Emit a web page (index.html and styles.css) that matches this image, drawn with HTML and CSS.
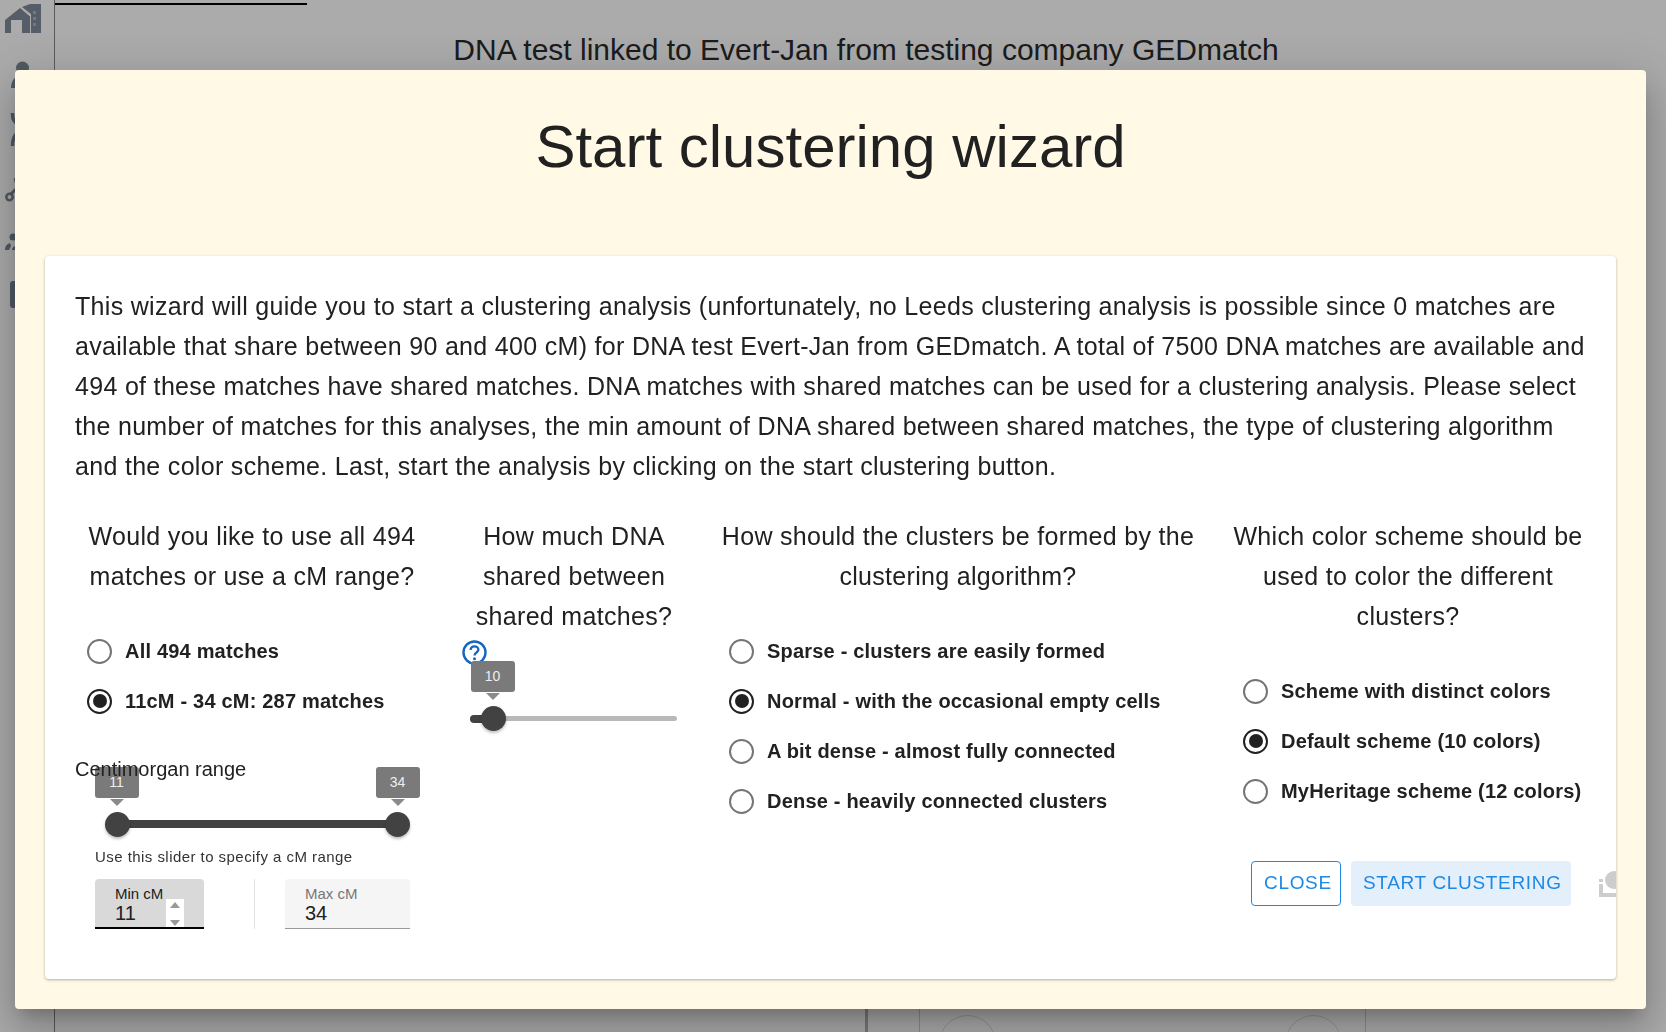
FILE: index.html
```html
<!DOCTYPE html>
<html lang="en">
<head>
<meta charset="utf-8">
<title>Start clustering wizard</title>
<link rel="stylesheet" href="styles.css">
</head>
<body>
<div class="page">
  <aside class="side">
    <svg class="home" viewBox="0 0 36 30"><path d="M0 16 15 4l10 8.500V29H17V16H6v13H0z"/><path d="M17 3 25 0h11v29H26V10z"/><rect x="28" y="7" width="3" height="3" fill="#b4b4b4"/><rect x="28" y="13" width="3" height="3" fill="#b4b4b4"/><rect x="28" y="19" width="3" height="3" fill="#b4b4b4"/></svg>
    <svg class="side-icons" viewBox="0 0 50 275"><circle cx="22.500" cy="18" r="6.500"/><path d="M11 38c0-8 5-13 12-14 4 0 6 1 6 14z"/><path d="M12.500 63c0 6 1 9 6 11M18 83c-4 2-5.500 6-5.500 13" fill="none" stroke="#7a8593" stroke-width="3.500"/><circle cx="9.500" cy="147" r="3.200" fill="none" stroke="#7a8593" stroke-width="2.500"/><path d="M11 144l6-6M15 128l3 10" fill="none" stroke="#7a8593" stroke-width="3"/><circle cx="13" cy="187" r="3.500"/><path d="M5 200c0-4 2-6 5-7l1 3-2 4zM12 200c0-2 1-3 3-4v4z"/><rect x="10" y="231" width="12" height="27" rx="3"/></svg>
  </aside>
  <main class="behind">
    <div class="tab-line"></div>
    <h2 class="behind-title">DNA test linked to Evert-Jan from testing company GEDmatch</h2>
    <div class="lower">
      <div class="low-a"></div>
      <div class="low-b"></div>
      <div class="low-c"><span class="ring"></span><span class="ring"></span></div>
    </div>
  </main>
</div>
<div class="backdrop"></div>
<section class="dialog">
  <h1 class="title">Start clustering wizard</h1>
  <div class="card">
    <p class="intro">This wizard will guide you to start a clustering analysis (unfortunately, no Leeds clustering analysis is possible since 0 matches are available that share between 90 and 400 cM) for DNA test Evert-Jan from GEDmatch. A total of 7500 DNA matches are available and 494 of these matches have shared matches. DNA matches with shared matches can be used for a clustering analysis. Please select the number of matches for this analyses, the min amount of DNA shared between shared matches, the type of clustering algorithm and the color scheme. Last, start the analysis by clicking on the start clustering button.</p>
    <div class="cols">
      <div class="col col-a">
        <h3 class="q">Would you like to use all 494 matches or use a cM range?</h3>
        <div class="radios">
          <label class="radio"><span class="dot"></span>All 494 matches</label>
          <label class="radio on"><span class="dot"></span>11cM - 34 cM: 287 matches</label>
        </div>
        <div class="range">
          <div class="range-label">Centimorgan range</div>
          <div class="slider wide">
            <span class="thumb t-min"><span class="bubble">11</span></span>
            <span class="thumb t-max"><span class="bubble">34</span></span>
          </div>
          <div class="helper">Use this slider to specify a cM range</div>
          <div class="inputs">
            <div class="field active"><span class="f-label">Min cM</span><span class="f-value">11</span>
              <span class="spin"><i class="up"></i><i class="down"></i></span></div>
            <div class="vline"></div>
            <div class="field idle"><span class="f-label">Max cM</span><span class="f-value">34</span></div>
          </div>
        </div>
      </div>
      <div class="col col-b">
        <h3 class="q">How much DNA shared between shared matches?</h3>
        <svg class="help" viewBox="0 0 25 25"><circle cx="12.500" cy="12.500" r="11" fill="none" stroke="#1565c0" stroke-width="2.400"/><path d="M8.600 10c0-2.200 1.700-3.700 3.900-3.700s3.900 1.500 3.900 3.500c0 2.700-3.900 2.800-3.900 5.700" fill="none" stroke="#1565c0" stroke-width="2.300"/><circle cx="12.500" cy="18.800" r="1.500" fill="#1565c0"/></svg>
        <div class="slider narrow">
          <span class="fill"></span>
          <span class="thumb t-one"><span class="bubble">10</span></span>
        </div>
      </div>
      <div class="col col-c">
        <h3 class="q">How should the clusters be formed by the clustering algorithm?</h3>
        <div class="radios">
          <label class="radio"><span class="dot"></span>Sparse - clusters are easily formed</label>
          <label class="radio on"><span class="dot"></span>Normal - with the occasional empty cells</label>
          <label class="radio"><span class="dot"></span>A bit dense - almost fully connected</label>
          <label class="radio"><span class="dot"></span>Dense - heavily connected clusters</label>
        </div>
      </div>
      <div class="col col-d">
        <h3 class="q">Which color scheme should be used to color the different clusters?</h3>
        <div class="radios">
          <label class="radio"><span class="dot"></span>Scheme with distinct colors</label>
          <label class="radio on"><span class="dot"></span>Default scheme (10 colors)</label>
          <label class="radio"><span class="dot"></span>MyHeritage scheme (12 colors)</label>
        </div>
        <div class="actions">
          <button class="btn outline">CLOSE</button>
          <button class="btn tint">START CLUSTERING</button>
          <svg class="clipped" viewBox="0 0 30 26"><circle cx="16" cy="9" r="9"/><rect x="1" y="8" width="4" height="3"/><path d="M1 13h4v9h25v4H1z"/></svg>
        </div>
      </div>
    </div>
  </div>
</section>
</body>
</html>
```
FILE: styles.css
```css
* { box-sizing: border-box; }
html, body { margin: 0; height: 100%; overflow: hidden; background: #fff; }
body { font-family: "Liberation Sans", Arial, sans-serif; color: #212121; width: 1666px; height: 1032px; position: relative; }
.page { display: flex; height: 1032px; }
.side { width: 55px; border-right: 1px solid #888; padding: 4px 0 0 5px; flex: none; }
.home { width: 36px; height: 30px; fill: #7f8b9b; display: block; }
.side-icons { display: block; width: 50px; height: 275px; margin: 16px 0 0 -5px; fill: #7a8593; }
.behind { flex: 1; display: flex; flex-direction: column; }
.tab-line { width: 252px; height: 2px; background: #000; margin-top: 3px; }
.behind-title { margin: 29px 0 0; font-size: 30px; font-weight: 400; line-height: 32px; text-align: center; padding-left: 11px; color: #2a2a2a; }
.lower { margin-top: auto; height: 30px; display: flex; }
.low-a { width: 813px; border-right: 3px solid #b4b4b4; }
.low-b { width: 52px; border-right: 1px solid #d0d0d0; }
.low-c { width: 446px; border-right: 1px solid #d0d0d0; display: flex; justify-content: space-between; padding: 13px 23px 0 19px; }
.ring { width: 57px; height: 57px; border-radius: 50%; border: 1px solid #dcdcdc; flex: none; }
.backdrop { position: fixed; inset: 0; background: rgba(0,0,0,.33); }
.dialog { position: absolute; left: 15px; top: 70px; width: 1631px; height: 939px; background: #fff9e6; border-radius: 4px; padding: 32px 30px 30px; box-shadow: 0 11px 15px -7px rgba(0,0,0,.2), 0 24px 38px 3px rgba(0,0,0,.14), 0 9px 46px 8px rgba(0,0,0,.12); }
.title { margin: 0 0 64px; font-size: 60px; font-weight: 400; line-height: 90px; text-align: center; color: #212121; }
.card { height: 723px; background: #fff; border-radius: 4px; padding: 30px 30px 0; overflow: hidden; box-shadow: 0 1px 3px rgba(0,0,0,.3); }
.intro { margin: 0 0 30px; font-size: 25px; line-height: 40px; letter-spacing: .31px; }
.cols { display: grid; grid-template-columns: 354px 290px 478px 422px; }
.col { min-width: 0; }
.q { margin: 0; font-size: 25px; line-height: 40px; font-weight: 400; text-align: center; letter-spacing: .31px; padding: 0 8px; }
.col-b .q { padding: 0 30px; }
.col-c .q { padding: 0; }
.col-d .q { padding: 0 26px; }
.radios { display: flex; flex-direction: column; gap: 10px; padding: 35px 0 0 12px; }
.col-c .radios { padding-left: 10px; }
.col-d .radios { padding-left: 46px; }
.radio { display: flex; align-items: center; gap: 13px; height: 40px; font-size: 20px; font-weight: 700; letter-spacing: .2px; white-space: nowrap; }
.dot { width: 25px; height: 25px; border-radius: 50%; border: 2.500px solid #757575; flex: none; position: relative; }
.on .dot { border-color: #212121; }
.on .dot::after { content: ""; position: absolute; inset: 3.500px; border-radius: 50%; background: #212121; }
.range { padding-top: 36px; }
.range-label { font-size: 20px; line-height: 24px; position: relative; z-index: 2; }
.slider { position: relative; border-radius: 4px; }
.slider.wide { width: 280px; height: 8px; background: #424242; margin: 39px 0 0 42px; }
.slider.narrow { width: 207px; height: 5px; background: #b9b9b9; margin: 51px 0 0 41px; }
.fill { display: block; }
.narrow .fill { width: 30px; height: 8px; background: #424242; border-radius: 4px; position: relative; top: -1.500px; }
.thumb { position: absolute; width: 25px; height: 25px; top: 50%; margin-top: -12.500px; margin-left: -12.500px; border-radius: 50%; background: #424242; box-shadow: 0 2px 3px rgba(0,0,0,.25); }
.t-min { left: 0; }
.t-max { left: 280px; }
.t-one { left: 23px; }
.bubble { position: absolute; left: -10px; top: -45px; width: 44px; height: 31px; line-height: 31px; background: #7a7a7a; color: #eee; text-align: center; font-size: 14px; border-radius: 3px; }
.t-max .bubble { left: -9px; }
.bubble::after { content: ""; position: absolute; left: 15px; top: 32px; border: 7px solid transparent; border-top-color: #8a8a8a; border-bottom: 0; }
.helper { font-size: 15px; line-height: 20px; letter-spacing: .45px; margin: 19px 0 0 20px; color: #333; }
.inputs { display: flex; margin: 12px 0 0 20px; height: 50px; }
.field { position: relative; padding: 6px 0 0 20px; border-radius: 4px 4px 0 0; }
.field.active { width: 109px; background: #d9d9d9; border-bottom: 2px solid #000; }
.field.idle { width: 125px; background: #f5f5f5; border-bottom: 1px solid #999; }
.vline { width: 1px; background: #e0e0e0; margin: 0 30px 0 50px; }
.f-label { display: block; font-size: 15px; line-height: 17px; }
.idle .f-label { color: #777; }
.f-value { display: block; font-size: 20px; line-height: 23px; color: #212121; }
.spin { position: absolute; left: 71px; top: 20px; width: 18px; height: 28px; background: #fff; display: flex; flex-direction: column; justify-content: space-between; align-items: center; padding: 3px 0 1px; }
.spin i { width: 0; height: 0; border-left: 5px solid transparent; border-right: 5px solid transparent; }
.up { border-bottom: 6px solid #999; }
.down { border-top: 6px solid #999; }
.help { display: block; width: 25px; height: 25px; margin: 4px 0 0 33px; position: relative; }
.actions { display: flex; gap: 10px; margin: 50px 0 0 54px; align-items: flex-start; white-space: nowrap; }
.btn { height: 45px; border-radius: 4px; font: 400 19px "Liberation Sans", Arial, sans-serif; letter-spacing: .67px; color: #1e88e5; padding: 0 12px 2px; }
.outline { width: 90px; background: #fff; border: 1px solid #1e88e5; }
.tint { width: 220px; background: #e3effb; border: 0; }
.clipped { width: 30px; height: 26px; flex: none; margin: 10px 0 0 17px; fill: #cdcdcd; }
```
